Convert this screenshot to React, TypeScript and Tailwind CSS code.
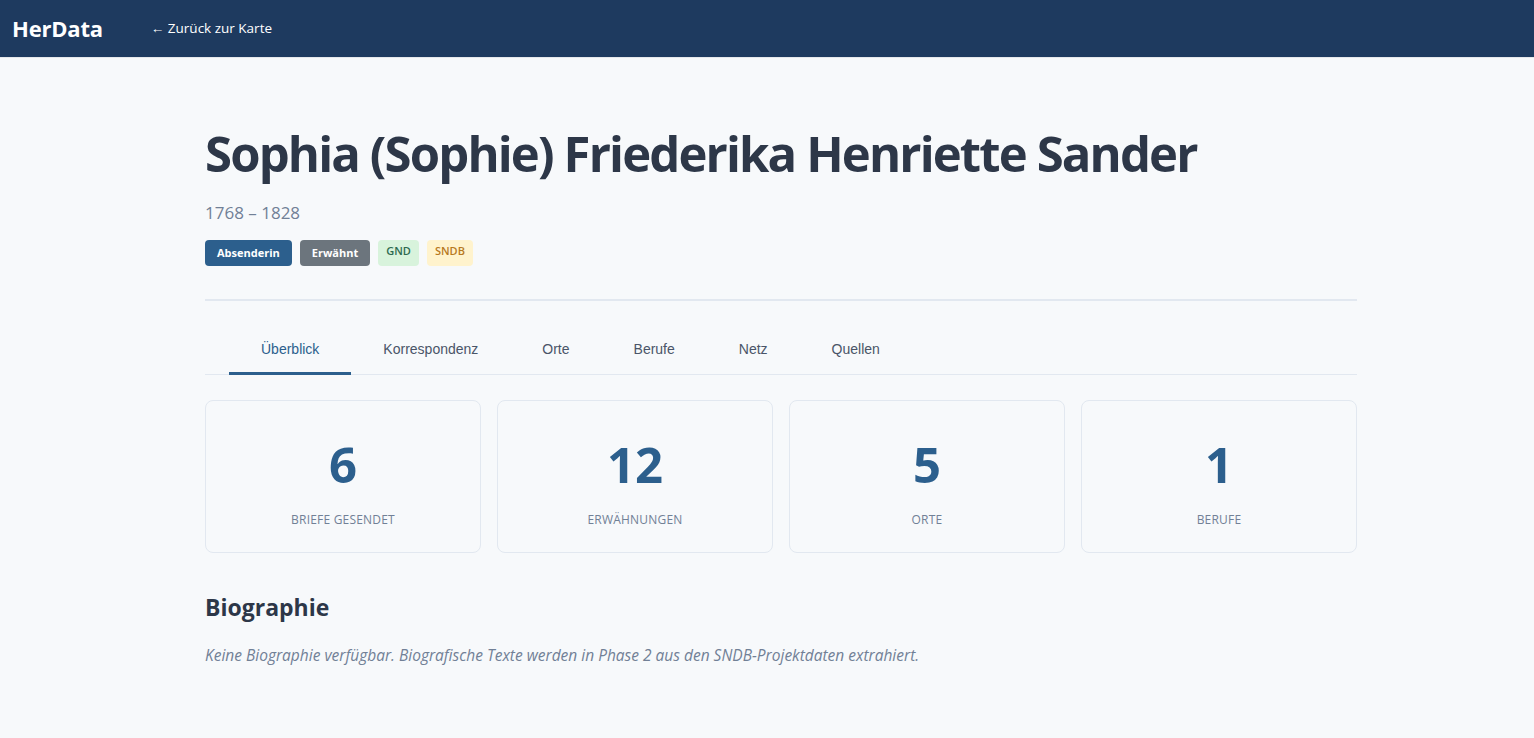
import React from "react";

const tabs = ["Überblick", "Korrespondenz", "Orte", "Berufe", "Netz", "Quellen"];
const stats = [
  { n: "6", l: "Briefe gesendet" },
  { n: "12", l: "Erwähnungen" },
  { n: "5", l: "Orte" },
  { n: "1", l: "Berufe" },
];

export default function App() {
  return (
    <div
      className="min-h-[738px] bg-[#f7f9fb] text-[#2d3748]"
      style={{ fontFamily: '"Open Sans", "Noto Sans", sans-serif' }}
    >
      <header className="h-[58px] bg-[#1e3a5f] flex items-center px-3 border-b border-[#e5e7eb]">
        <span className="text-white font-bold text-[22px] tracking-[-0.2px]">HerData</span>
        <a className="ml-[48px] text-white text-[13.5px]">← Zurück zur Karte</a>
      </header>
      <main className="pl-[205px] pt-[66px]">
        <div className="w-[1152px]">
          <h1 className="text-[49px] font-bold leading-[1.2] text-[#2d3748] tracking-[-1.85px]">
            Sophia (Sophie) Friederika Henriette Sander
          </h1>
          <div className="mt-[18px] text-[17px] leading-[24px] text-[#718096]">1768 – 1828</div>
          <div className="mt-[15px] flex gap-2">
            <span className="h-[26px] px-3 rounded bg-[#2c5f8d] text-white text-[11px] font-bold flex items-center">Absenderin</span>
            <span className="h-[26px] px-3 rounded bg-[#6c757d] text-white text-[11px] font-bold flex items-center">Erwähnt</span>
            <span className="h-[26px] px-2 rounded bg-[#d8f3dc] text-[#2d6a4f] text-[11px] font-semibold flex items-center pb-[3px]">GND</span>
            <span className="h-[26px] px-2 rounded bg-[#fff3cd] text-[#b7791f] text-[11px] font-semibold flex items-center pb-[3px]">SNDB</span>
          </div>
          <div className="mt-[33px] h-[2px] bg-[#e2e8f0]" />
          <nav
            className="mt-[20px] flex border-b border-[#e2e8f0] pl-[24px]"
            style={{ fontFamily: '"Liberation Sans", Arial, sans-serif' }}
          >
            {tabs.map((t, i) => (
              <div
                key={t}
                className={
                  "px-8 pt-[18px] pb-[12px] text-[14px] border-b-[3px] -mb-px " +
                  (i === 0 ? "border-[#2c5f8d] text-[#2c5f8d]" : "border-transparent text-[#4a5568]")
                }
              >
                {t}
              </div>
            ))}
          </nav>
          <div className="mt-[25px] grid grid-cols-4 gap-4">
            {stats.map((s) => (
              <div key={s.l} className="h-[153px] rounded-lg border border-[#e2e8f0] flex flex-col items-center pt-[34px]">
                <div className="text-[49px] font-bold leading-[1.2] text-[#2c5f8d]">{s.n}</div>
                <div className="mt-[17px] text-[12px] uppercase tracking-[0.2px] text-[#718096]">{s.l}</div>
              </div>
            ))}
          </div>
          <h2 className="mt-[37px] text-[23px] font-bold text-[#2d3748]">Biographie</h2>
          <p className="mt-[20px] text-[15.5px] italic text-[#718096]">
            Keine Biographie verfügbar. Biografische Texte werden in Phase 2 aus den SNDB-Projektdaten extrahiert.
          </p>
        </div>
      </main>
    </div>
  );
}
